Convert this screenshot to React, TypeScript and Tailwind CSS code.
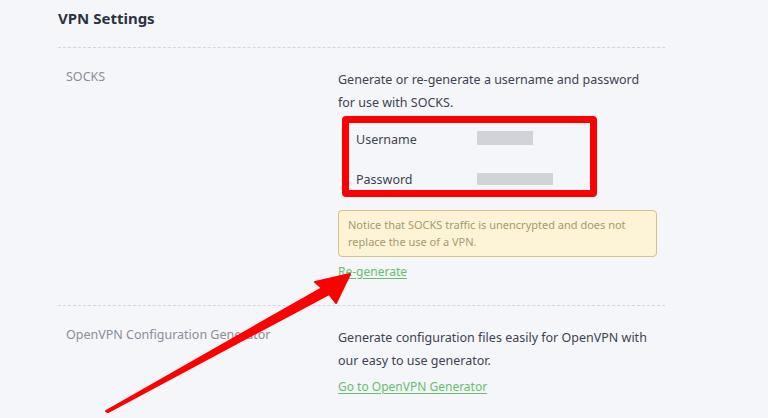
import React from 'react';

const Arrow: React.FC = () => (
  <svg className="absolute left-0 top-0 pointer-events-none" width="768" height="418" viewBox="0 0 768 418">
    <polygon
      points="106,411 322,288 315,282 350,274 336,303 329,294 108,412"
      fill="#ff0000"
      stroke="#ff0000"
      strokeWidth="2"
      strokeLinejoin="round"
    />
  </svg>
);

export default function App() {
  return (
    <div
      className="relative w-[768px] h-[418px] overflow-hidden bg-[#f5f6fa] text-[#3e4350]"
      style={{ fontFamily: '"Noto Sans", "Open Sans", sans-serif' }}
    >
      <div className="ml-[58px] w-[607px]">
        <h1 className="pt-[7px] pb-[17px] text-[15px] leading-[23px] font-bold text-[#2d3242] border-b border-dashed border-[#d4d6dc]">
          VPN Settings
        </h1>

        {/* SOCKS */}
        <div className="flex border-b border-dashed border-[#d4d6dc]">
          <div className="w-[280px] shrink-0 pl-[8px] pt-[20px] text-[12.5px] leading-[17px] text-[#8a8e99]">SOCKS</div>
          <div className="flex-1 pt-[20px]">
            <p className="text-[12.5px] leading-[23px]">
              Generate or re-generate a username and password
              <br />
              for use with SOCKS.
            </p>
            <div className="mt-[2px] ml-[4px] w-[255px] rounded-[4px] border-[7px] border-[#ff0000] px-[7px] pt-[7px]">
              <div className="flex h-[20px] items-center">
                <span className="w-[121px] text-[12.5px]">Username</span>
                <span className="h-[14px] w-[56px] -mt-[4px] bg-[#d2d3d8]" />
              </div>
              <div className="mt-[20px] flex h-[20px] items-center">
                <span className="w-[121px] text-[12.5px]">Password</span>
                <span className="h-[12px] w-[76px] -mt-[3px] bg-[#d2d3d8]" />
              </div>
            </div>
            <div className="mt-[13px] mr-[8px] rounded-[4px] border border-[#d2c289] bg-[#fdf4d7] px-[9px] pt-[5px] pb-[6px] text-[11px] leading-[17px] text-[#a69a72]">
              Notice that SOCKS traffic is unencrypted and does not
              <br />
              replace the use of a VPN.
            </div>
            <a className="block mt-[7px] mb-[25px] text-[12px] leading-[16px] text-[#64c06c] underline underline-offset-2">Re-generate</a>
          </div>
        </div>

        {/* OpenVPN */}
        <div className="flex">
          <div className="w-[280px] shrink-0 pl-[8px] pt-[20px] text-[12.5px] leading-[17px] text-[#8a8e99]">OpenVPN Configuration Generator</div>
          <div className="flex-1 pt-[20px]">
            <p className="text-[12.5px] leading-[23px]">
              Generate configuration files easily for OpenVPN with
              <br />
              our easy to use generator.
            </p>
            <a className="block mt-[7px] text-[12px] leading-[16px] text-[#64c06c] underline underline-offset-2">Go to OpenVPN Generator</a>
          </div>
        </div>
      </div>
      <Arrow />
    </div>
  );
}
